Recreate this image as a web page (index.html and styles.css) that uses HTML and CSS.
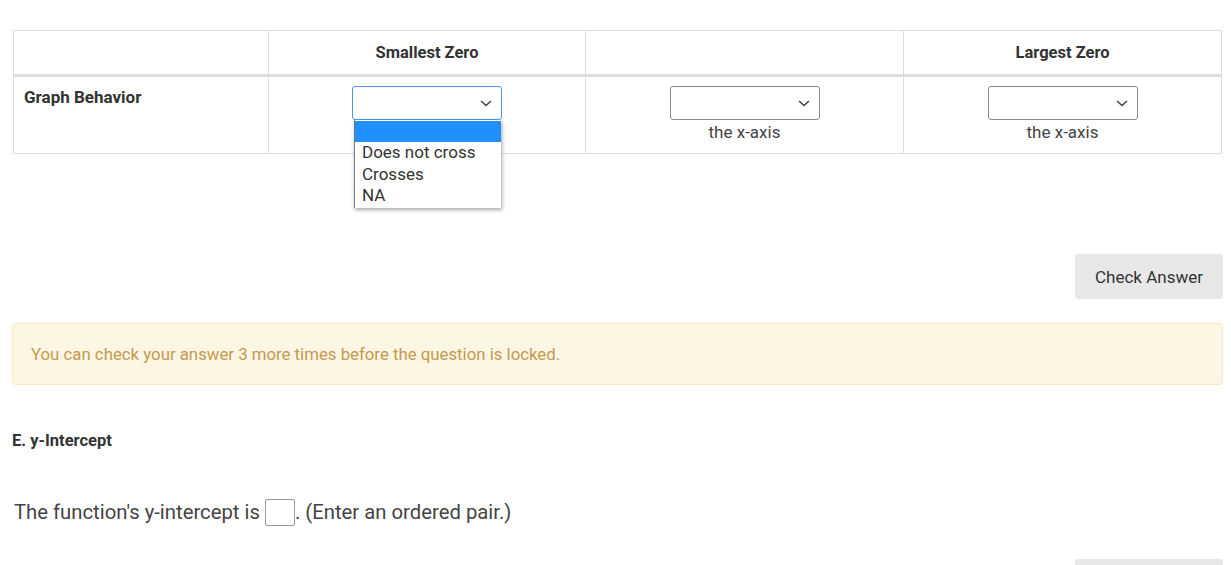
FILE: index.html
```html
<!DOCTYPE html>
<html>
<head>
<meta charset="utf-8">
<link rel="stylesheet" href="styles.css">
</head>
<body>
<div class="page">
  <div class="table-wrap">
    <table class="grid">
      <colgroup>
        <col class="c1"><col class="c2"><col class="c3"><col class="c4">
      </colgroup>
      <thead>
        <tr>
          <th></th>
          <th>Smallest Zero</th>
          <th></th>
          <th>Largest Zero</th>
        </tr>
      </thead>
      <tbody>
        <tr>
          <td class="label">Graph Behavior</td>
          <td class="center">
            <div class="select-holder">
              <div class="select focused">
                <svg class="chev" width="12" height="7" viewBox="0 0 12 7"><path d="M1 1 L6 5.5 L11 1" fill="none" stroke="#444" stroke-width="1.6"/></svg>
              </div>
              <ul class="dropdown">
                <li class="hl">&nbsp;</li>
                <li>Does not cross</li>
                <li>Crosses</li>
                <li>NA</li>
              </ul>
            </div>
            <div class="axis">the x-axis</div>
          </td>
          <td class="center">
            <div class="select">
              <svg class="chev" width="12" height="7" viewBox="0 0 12 7"><path d="M1 1 L6 5.5 L11 1" fill="none" stroke="#444" stroke-width="1.6"/></svg>
            </div>
            <div class="axis">the x-axis</div>
          </td>
          <td class="center">
            <div class="select">
              <svg class="chev" width="12" height="7" viewBox="0 0 12 7"><path d="M1 1 L6 5.5 L11 1" fill="none" stroke="#444" stroke-width="1.6"/></svg>
            </div>
            <div class="axis">the x-axis</div>
          </td>
        </tr>
      </tbody>
    </table>
  </div>

  <div class="actions">
    <button class="btn">Check Answer</button>
  </div>

  <div class="alert">You can check your answer 3 more times before the question is locked.</div>

  <h4 class="section">E. y-Intercept</h4>

  <p class="sentence">The function's y-intercept is <span class="blank"></span>. (Enter an ordered pair.)</p>

  <div class="actions bottom">
    <button class="btn"></button>
  </div>
</div>
</body>
</html>
```

FILE: styles.css
```css
* { box-sizing: border-box; }
html, body { margin: 0; padding: 0; background: #fff; }
body {
  font-family: Roboto, "Liberation Sans", Arial, sans-serif;
  color: #333;
  overflow: hidden;
  height: 565px;
}
.page {
  width: 1211px;
  margin-left: 12px;
  padding-top: 30px;
}
.table-wrap {
  margin: 0 2px 0 1px;
}
.grid {
  width: 1208px;
  border-collapse: collapse;
  table-layout: fixed;
}
.c1 { width: 255px; }
.c2 { width: 317px; }
.c3 { width: 318px; }
.c4 { width: 318px; }
.grid th, .grid td {
  border: 1px solid #ddd;
}
.grid th {
  height: 45px;
  padding: 0 10px;
  font-size: 16.5px;
  font-weight: 700;
  line-height: 23px;
  text-align: center;
  color: #333;
  border-bottom: 3px solid #ddd;
}
.grid td {
  padding: 9px 10px 9px;
  vertical-align: top;
  font-size: 17px;
  line-height: 24px;
}
.grid td.label {
  font-weight: 700;
  color: #333;
  padding-left: 10px;
  line-height: 22px;
}
.grid td.center {
  text-align: center;
}
.select-holder {
  position: relative;
  width: 150px;
  margin: 0 auto;
}
.select {
  position: relative;
  width: 150px;
  height: 34px;
  margin: 0 auto;
  border: 1px solid #8a8a8a;
  border-radius: 3px;
  background: #fff;
}
.select.focused {
  border-color: #4a97df;
}
.chev {
  position: absolute;
  right: 9px;
  top: 13px;
}
.axis {
  color: #444;
  font-size: 17px;
  line-height: 24px;
}
.dropdown {
  position: absolute;
  left: 2px;
  top: 34px;
  width: 147px;
  margin: 0;
  padding: 0 0 1px;
  list-style: none;
  background: #fff;
  border-left: 1px solid #777;
  box-shadow: 1px 2px 4px rgba(0,0,0,0.35);
  text-align: left;
  z-index: 5;
}
.dropdown li {
  height: 21.5px;
  line-height: 21px;
  padding-left: 7px;
  font-size: 17px;
  color: #333;
}
.dropdown li.hl {
  background: #1e90ff;
  margin-top: 1px;
  height: 21px;
}
.actions {
  display: flex;
  justify-content: flex-end;
  margin-top: 100px;
}
.btn {
  width: 148px;
  height: 45px;
  border: none;
  border-radius: 3px;
  background: #e8e8e8;
  font-family: Roboto, "Liberation Sans", Arial, sans-serif;
  font-size: 17px;
  color: #333;
  padding: 0;
}
.alert {
  margin-top: 24px;
  height: 62px;
  border: 1px solid #f8e8c4;
  border-radius: 4px;
  background: #fdf6e3;
  color: #c49a52;
  font-size: 16.8px;
  line-height: 20px;
  padding: 20px 18px;
}
.section {
  margin: 45px 0 0;
  font-size: 16.5px;
  font-weight: 700;
  line-height: 22px;
  color: #333;
}
.sentence {
  margin: 45px 0 0 2px;
  font-size: 20.3px;
  line-height: 30px;
  color: #444;
}
.blank {
  display: inline-block;
  width: 30px;
  height: 27px;
  border: 1px solid #999;
  border-radius: 2px;
  vertical-align: -7px;
  background: #fff;
}
.actions.bottom {
  margin-top: 32px;
}
```
